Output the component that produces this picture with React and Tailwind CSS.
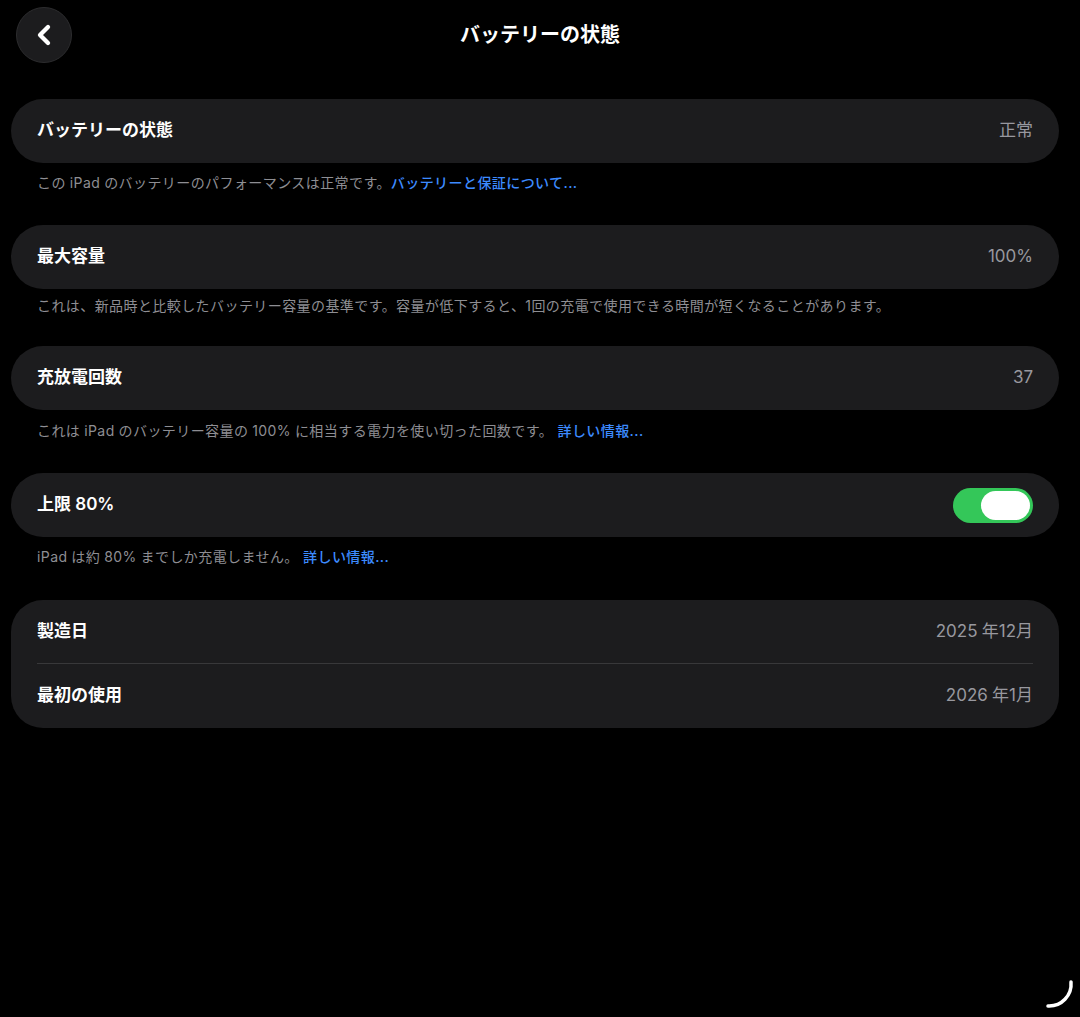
import { ChevronLeft } from 'lucide-react'

const FONT = { fontFamily: 'Inter, "Noto Sans CJK JP", "Noto Sans", sans-serif' }

// narrow gap between Japanese and Latin runs, as iOS renders it
const S = '\u2005'

function Card({ label, value, children }) {
  return (
    <div className="flex h-16 items-center justify-between rounded-full bg-[#1c1c1e] px-[26px]">
      <span className="text-[17px] font-semibold text-white">{label}</span>
      {children ?? <span className="text-[17px] text-[#98989f]">{value}</span>}
    </div>
  )
}

function Footer({ children, link, className }) {
  return (
    <p className={`pl-[26px] text-[14px] leading-5 tracking-[0.03em] text-[#8e8e93] ${className}`}>
      {children}
      {link && <span className="font-medium text-[#3d8bff]">{link}</span>}
    </p>
  )
}

function Toggle() {
  return (
    <div className="flex h-[35px] w-[80px] items-center justify-end rounded-full bg-[#34c759] pr-[3px]">
      <div className="h-[29px] w-[49px] rounded-full bg-white" />
    </div>
  )
}

export default function App() {
  return (
    <div className="relative min-h-[1017px] w-full bg-black" style={FONT}>
      <div className="relative flex h-[70px] items-center justify-center">
        <button className="absolute left-[16px] top-[7px] flex h-14 w-14 items-center justify-center rounded-full border border-[#2c2c2e] bg-[#1c1c1e] text-white">
          <ChevronLeft size={32} strokeWidth={3.2} />
        </button>
        <h1 className="text-[20px] font-bold text-white">バッテリーの状態</h1>
      </div>

      <div className="pl-[11px] pr-[21px] pt-[29px]">
        <Card label="バッテリーの状態" value="正常" />
        <Footer className="mt-[10px] mb-[32px]" link="バッテリーと保証について...">
          {`この${S}iPad${S}のバッテリーのパフォーマンスは正常です。`}
        </Footer>

        <Card label="最大容量" value="100%" />
        <Footer className="mt-[7px] mb-[30px]">
          これは、新品時と比較したバッテリー容量の基準です。容量が低下すると、1回の充電で使用できる時間が短くなることがあります。
        </Footer>

        <Card label="充放電回数" value="37" />
        <Footer className="mt-[11px] mb-[32px]" link="詳しい情報...">
          {`これは${S}iPad${S}のバッテリー容量の${S}100%${S}に相当する電力を使い切った回数です。 `}
        </Footer>

        <Card label={`上限${S}80%`}>
          <Toggle />
        </Card>
        <Footer className="mt-[10px] mb-[33px]" link="詳しい情報...">
          {`iPad${S}は約${S}80%${S}までしか充電しません。 `}
        </Footer>

        <div className="rounded-[32px] bg-[#1c1c1e] px-[26px]">
          <div className="flex h-16 items-center justify-between border-b border-[#38383a]">
            <span className="text-[17px] font-semibold text-white">製造日</span>
            <span className="text-[17px] text-[#98989f]">{`2025${S}年12月`}</span>
          </div>
          <div className="flex h-16 items-center justify-between">
            <span className="text-[17px] font-semibold text-white">最初の使用</span>
            <span className="text-[17px] text-[#98989f]">{`2026${S}年1月`}</span>
          </div>
        </div>
      </div>

      <svg className="absolute bottom-[6px] right-[4px]" width="34" height="34" viewBox="0 0 34 34">
        <path d="M29 5 A 22 22 0 0 1 6 29" fill="none" stroke="white" strokeWidth="3.5" strokeLinecap="round" />
      </svg>
    </div>
  )
}
